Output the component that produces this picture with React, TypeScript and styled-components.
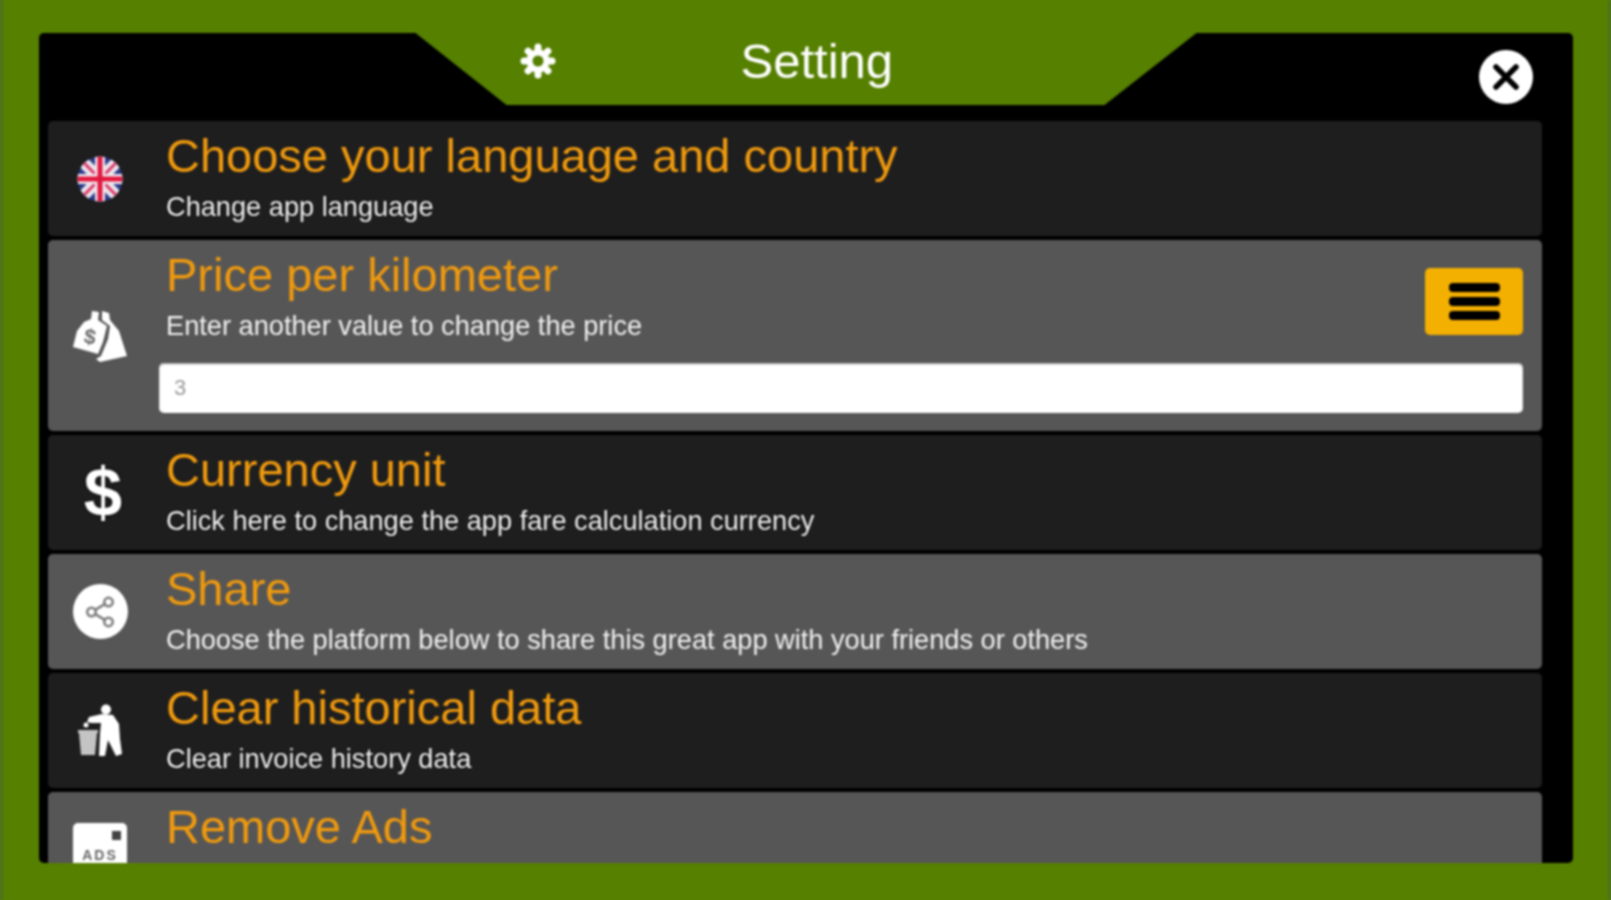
import React from "react";
import styled, { createGlobalStyle } from "styled-components";
import { Share2 } from "lucide-react";

const Global = createGlobalStyle`
  html, body { margin: 0; padding: 0; background: #558000; }
  * { box-sizing: border-box; }
`;

const Screen = styled.div`
  width: 1611px;
  height: 900px;
  padding: 33px 35px 37px 36px;
  background: #558000;
  border-left: 3px solid #4b7022;
  border-right: 3px solid #4b7022;
  font-family: "Liberation Sans", Arial, sans-serif;
  overflow: hidden;
  filter: blur(0.8px);
`;

const Panel = styled.div`
  height: 100%;
  display: flex;
  flex-direction: column;
  background: #000;
  border-radius: 5px;
  overflow: hidden;
`;

const Header = styled.header`
  flex: none;
  height: 88px;
  display: grid;
  grid-template-columns: 1fr 781px 1fr;
  align-items: start;
`;

const Tab = styled.div`
  grid-column: 2;
  height: 72px;
  display: flex;
  align-items: center;
  gap: 184px;
  padding: 0 0 16px 103px;
  background: #558000;
  clip-path: polygon(0 0, 100% 0, 689px 100%, 91px 100%);
  color: #fff;
`;

const HeaderTitle = styled.h1`
  margin: 0;
  font-size: 49px;
  line-height: 56px;
  font-weight: 400;
  color: #fff;
`;

const CloseButton = styled.button`
  grid-column: 3;
  justify-self: end;
  width: 54px;
  height: 54px;
  margin: 17px 40px 0 0;
  padding: 0;
  border: 0;
  border-radius: 50%;
  background: #fff;
  display: flex;
  align-items: center;
  justify-content: center;
`;

const List = styled.div`
  flex: 1;
  min-height: 0;
  display: flex;
  flex-direction: column;
  gap: 4px;
  padding: 0 31px 0 9px;
  overflow: hidden;
`;

const Row = styled.section<{ $light?: boolean }>`
  flex: none;
  min-height: 115px;
  display: grid;
  grid-template-columns: 104px 1fr;
  background: ${(p) => (p.$light ? "#565656" : "#1e1e1e")};
  border-radius: 5px;
`;

const IconCell = styled.div`
  display: flex;
  align-items: center;
  justify-content: center;
`;

const Body = styled.div`
  min-width: 0;
  padding: 0 19px 0 7px;
`;

const Head = styled.div`
  display: flex;
  justify-content: space-between;
  align-items: flex-start;
`;

const Texts = styled.div`
  padding: 9px 0 0 7px;
`;

const Title = styled.h2`
  margin: 0;
  font-size: 47px;
  line-height: 52px;
  font-weight: 400;
  color: #f09a0e;
`;

const Subtitle = styled.p<{ $light?: boolean }>`
  margin: 9px 0 0;
  font-size: 27.2px;
  line-height: 32px;
  color: #f2f2f2;
  text-shadow: ${(p) => (p.$light ? "none" : "0 0 2px #000")};
`;

const MenuButton = styled.button`
  width: 98px;
  height: 67px;
  margin-top: 28px;
  padding: 0;
  border: 0;
  border-radius: 5px;
  background: #f4b000;
  display: flex;
  flex-direction: column;
  align-items: center;
  justify-content: center;
  gap: 5px;
`;

const MenuBar = styled.span`
  width: 51px;
  height: 9px;
  border-radius: 4px;
  background: #000;
`;

const ValueInput = styled.input`
  display: block;
  width: 100%;
  height: 50px;
  margin: 21px 0 18px;
  padding: 0 15px;
  border: 0;
  border-radius: 5px;
  background: #fff;
  box-shadow: inset 0 1px 2px #999;
  font-family: inherit;
  font-size: 22px;
  color: #999;
  outline: none;
`;

const Dollar = styled.span`
  margin-left: 6px;
  font-size: 69px;
  line-height: 1;
  font-weight: 700;
  color: #fff;
  text-shadow: 0 0 3px #000;
`;

const ShareDisc = styled.div`
  width: 55px;
  height: 55px;
  border-radius: 50%;
  background: #fff;
  display: flex;
  align-items: center;
  justify-content: center;
  color: #7d7d7d;
`;

const AdsCard = styled.div`
  position: relative;
  width: 54px;
  height: 54px;
  padding-top: 24px;
  border-radius: 5px;
  background: #fff;
  text-align: center;
  font-size: 14px;
  font-weight: 700;
  letter-spacing: 2px;
  color: #666;
`;

const AdsMark = styled.span`
  position: absolute;
  top: 8px;
  right: 6px;
  width: 9px;
  height: 9px;
  background: #444;
`;

const Gear = () => (
  <svg width="38" height="38" viewBox="0 0 38 38">
    <g stroke="#fff" strokeWidth="7" strokeLinecap="round">
      <path d="M19 5 V33 M5 19 H33 M9.1 9.1 L28.9 28.9 M28.9 9.1 L9.1 28.9" />
    </g>
    <circle cx="19" cy="19" r="11.5" fill="#fff" />
    <circle cx="19" cy="19" r="5.5" fill="#558000" />
  </svg>
);

const Flag = () => (
  <svg width="46" height="46" viewBox="0 0 46 46">
    <defs>
      <clipPath id="flag-disc">
        <circle cx="23" cy="23" r="22.5" />
      </clipPath>
    </defs>
    <g clipPath="url(#flag-disc)">
      <rect width="46" height="46" fill="#2b3a8c" />
      <path d="M0 4 L42 46 M4 0 L46 42 M46 4 L4 46 M42 0 L0 42" stroke="#e8e4ea" strokeWidth="6" />
      <path d="M0 0 L46 46 M46 0 L0 46" stroke="#e03a6a" strokeWidth="3" />
      <path d="M23 0 V46 M0 23 H46" stroke="#f0e8ee" strokeWidth="10" />
      <path d="M23 0 V46 M0 23 H46" stroke="#e3173e" strokeWidth="5" />
    </g>
  </svg>
);

const Bags = () => (
  <svg width="56" height="54" viewBox="0 0 56 54">
    <path d="M30 2 L37 4 L38 11 L47 22 L55 47 L28 53 L24 50 L29 47 L36 30 L38 17 L30 11 Z" fill="#fff" />
    <path d="M20 2 L27 3 L26 11 L35 17 L31 33 L26 45 L1 38 L5 22 L12 13 L19 10 Z" fill="#fff" />
    <text x="12" y="35" fontFamily="Liberation Sans" fontWeight="700" fontSize="21" fill="#6a6a6a" transform="rotate(10 18 28)">$</text>
  </svg>
);

const Cleaner = () => (
  <svg width="46" height="54" viewBox="0 0 46 54">
    <circle cx="29" cy="5.5" r="5" fill="#fff" />
    <path d="M12 13 L25 10 L36 11 L42 20 L43 35 L45 50 L39 52 L31 36 L28 52 L22 52 L23 29 L24 19 L14 19 L10 18 Z" fill="#fff" />
    <circle cx="9" cy="21" r="2.5" fill="#fff" />
    <path d="M1 26 H21 V29 H20 L18 51 H4 L2 29 H1 Z" fill="#c4c4c4" />
  </svg>
);

const App = () => (
  <Screen>
    <Global />
    <Panel>
      <Header>
        <Tab>
          <Gear />
          <HeaderTitle>Setting</HeaderTitle>
        </Tab>
        <CloseButton aria-label="Close">
          <svg width="30" height="30" viewBox="0 0 30 30">
            <path d="M5 5 L25 25 M25 5 L5 25" stroke="#000" strokeWidth="5.5" strokeLinecap="round" />
          </svg>
        </CloseButton>
      </Header>
      <List>
        <Row>
          <IconCell><Flag /></IconCell>
          <Body>
            <Texts>
              <Title>Choose your language and country</Title>
              <Subtitle>Change app language</Subtitle>
            </Texts>
          </Body>
        </Row>
        <Row $light>
          <IconCell><Bags /></IconCell>
          <Body>
            <Head>
              <Texts>
                <Title>Price per kilometer</Title>
                <Subtitle $light>Enter another value to change the price</Subtitle>
              </Texts>
              <MenuButton aria-label="Menu">
                <MenuBar />
                <MenuBar />
                <MenuBar />
              </MenuButton>
            </Head>
            <ValueInput readOnly value="3" />
          </Body>
        </Row>
        <Row>
          <IconCell><Dollar>$</Dollar></IconCell>
          <Body>
            <Texts>
              <Title>Currency unit</Title>
              <Subtitle>Click here to change the app fare calculation currency</Subtitle>
            </Texts>
          </Body>
        </Row>
        <Row $light>
          <IconCell>
            <ShareDisc><Share2 size={34} strokeWidth={1.8} /></ShareDisc>
          </IconCell>
          <Body>
            <Texts>
              <Title>Share</Title>
              <Subtitle $light>Choose the platform below to share this great app with your friends or others</Subtitle>
            </Texts>
          </Body>
        </Row>
        <Row>
          <IconCell><Cleaner /></IconCell>
          <Body>
            <Texts>
              <Title>Clear historical data</Title>
              <Subtitle>Clear invoice history data</Subtitle>
            </Texts>
          </Body>
        </Row>
        <Row $light>
          <IconCell>
            <AdsCard>ADS<AdsMark /></AdsCard>
          </IconCell>
          <Body>
            <Texts>
              <Title>Remove Ads</Title>
            </Texts>
          </Body>
        </Row>
      </List>
    </Panel>
  </Screen>
);

export default App;
